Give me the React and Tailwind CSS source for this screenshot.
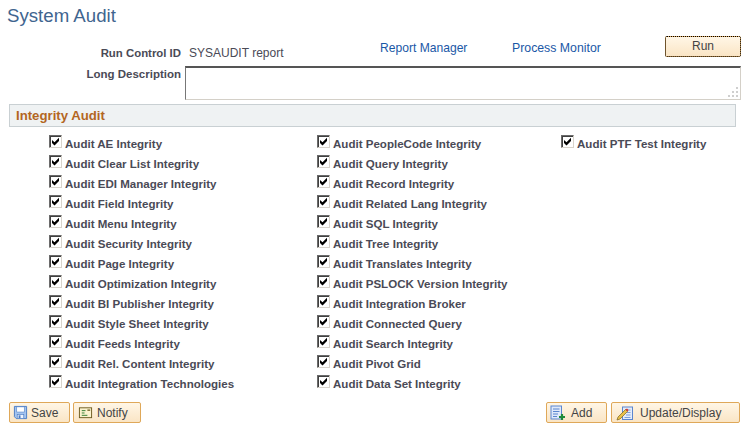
const col1 = ["Audit AE Integrity","Audit Clear List Integrity","Audit EDI Manager Integrity","Audit Field Integrity","Audit Menu Integrity","Audit Security Integrity","Audit Page Integrity","Audit Optimization Integrity","Audit BI Publisher Integrity","Audit Style Sheet Integrity","Audit Feeds Integrity","Audit Rel. Content Integrity","Audit Integration Technologies"];
const col2 = ["Audit PeopleCode Integrity","Audit Query Integrity","Audit Record Integrity","Audit Related Lang Integrity","Audit SQL Integrity","Audit Tree Integrity","Audit Translates Integrity","Audit PSLOCK Version Integrity","Audit Integration Broker","Audit Connected Query","Audit Search Integrity","Audit Pivot Grid","Audit Data Set Integrity"];
const col3 = ["Audit PTF Test Integrity"];

function Check({ label }) {
  return (
    <div className="flex h-5 items-start">
      <span className="relative mt-[-2px] h-[13px] w-[13px] shrink-0 border border-t-[#6b6b6b] border-l-[#6b6b6b] border-r-[#d8d4cc] border-b-[#d8d4cc] bg-white shadow-[inset_1px_1px_0_#404040]">
        <svg viewBox="0 0 11 11" className="absolute left-0 top-0 h-[11px] w-[11px]">
          <path d="M2 4 L4.5 6.3 L9 1.8 L9 5 L4.5 9.5 L2 7 Z" fill="#000" />
        </svg>
      </span>
      <span className="ml-[3px] text-[11.55px] leading-[15px] font-bold text-[#4a4a56]">{label}</span>
    </div>
  );
}

function Btn({ children, w, label, center }) {
  return (
    <button className={`flex h-[21px] items-center rounded-[2px] border border-[#dfa859] bg-gradient-to-b from-[#fff6e6] to-[#fae5c5] text-xs text-[#444] ${w}`}>
      {children}
      <span className={center ? "flex-1 text-center" : ""}>{label}</span>
    </button>
  );
}

export default function App() {
  return (
    <div className="h-[434px] w-[756px] overflow-hidden bg-white font-['Liberation_Sans',Arial,sans-serif]">
      <h1 className="pl-[7px] pt-[5px] text-[18.67px] leading-[21px] font-normal text-[#3f658f]">System Audit</h1>

      <div className="mt-[10px] flex h-[30px] items-start">
        <div className="mt-[10px] w-[181px] text-right text-[11.4px] leading-[15px] font-bold text-[#4a4a56]">Run Control ID</div>
        <div className="ml-2 mt-[10px] w-[191px] text-xs leading-[15px] text-[#4a4a56]">SYSAUDIT report</div>
        <a className="mt-[6px] w-[132px] text-[12.1px] leading-[13px] text-[#1a57a6]">Report Manager</a>
        <a className="mt-[6px] w-[153px] text-[12.3px] leading-[13px] text-[#1a57a6]">Process Monitor</a>
        <button className="h-[21px] w-[76px] rounded-[2px] border border-dotted border-black bg-[#dfa859] text-xs text-[#444]">
          <span className="block h-full w-full bg-gradient-to-b from-[#fff6e6] to-[#fae5c5] leading-[19px]">Run</span>
        </button>
      </div>

      <div className="flex h-[34px] items-start">
        <div className="mt-[1px] w-[181px] text-right text-[11.5px] leading-[15px] font-bold text-[#4a4a56]">Long Description</div>
        <div className="relative ml-1 h-[34px] w-[556px] border border-t-2 border-l border-t-[#555] border-l-[#777] border-r-[#d4d0c8] border-b-[#d4d0c8] bg-white">
          <svg viewBox="0 0 12 12" className="absolute bottom-[1px] right-[1px] h-3 w-3">
            <g fill="#cfcfcf">
              <rect x="9" y="1" width="2" height="2" />
              <rect x="5" y="5" width="2" height="2" />
              <rect x="9" y="5" width="2" height="2" />
              <rect x="1" y="9" width="2" height="2" />
              <rect x="5" y="9" width="2" height="2" />
              <rect x="9" y="9" width="2" height="2" />
            </g>
          </svg>
        </div>
      </div>

      <div className="ml-[9px] mt-1 flex h-[23px] w-[727px] items-center border border-[#c9d0d3] bg-[#eff2f3] pl-[6px] text-[13.2px] font-bold text-[#b3661f]">Integrity Audit</div>

      <div className="mt-[10px] flex h-[260px] pl-[49px]">
        <div className="w-[268px]">{col1.map((l) => <Check key={l} label={l} />)}</div>
        <div className="w-[244px]">{col2.map((l) => <Check key={l} label={l} />)}</div>
        <div>{col3.map((l) => <Check key={l} label={l} />)}</div>
      </div>

      <div className="mt-[5px] flex items-start pl-[9px]">
        <Btn w="w-[61px]" label="Save">
          <svg viewBox="0 0 16 16" className="ml-[3px] mr-[3px] h-[15px] w-[15px]">
            <path d="M1.5 1.5 H14.5 V14.5 H3.5 L1.5 12.5 Z" fill="#a4c4ef" stroke="#4a7cc4" />
            <rect x="4" y="2" width="8" height="5.5" fill="#fff" stroke="#4a7cc4" strokeWidth="0.6" />
            <rect x="4.5" y="10" width="7" height="4.5" fill="#eef3fc" stroke="#4a7cc4" strokeWidth="0.7" />
            <rect x="6" y="11" width="2" height="3" fill="#4a7cc4" />
          </svg>
        </Btn>
        <div className="ml-[3px]">
          <Btn w="w-[68px]" label="Notify">
            <svg viewBox="0 0 16 16" className="ml-[4px] mr-[4px] h-[15px] w-[15px]">
              <rect x="1.5" y="3" width="13" height="10.5" fill="#fbf3cf" stroke="#6b5a1e" />
              <path d="M4 6 H8 M4 8.5 H7 M4 11 H10" stroke="#2f7a2f" strokeWidth="1" />
              <path d="M10 5.5 H13" stroke="#6b5a1e" strokeWidth="1.4" />
            </svg>
          </Btn>
        </div>
        <div className="ml-[405px]">
          <Btn w="w-[61px]" label="Add">
            <svg viewBox="0 0 16 16" className="ml-[3px] mr-[5px] h-4 w-4 shrink-0">
              <rect x="1" y="1" width="10.5" height="13" fill="#dfe9fa" stroke="#5b86cf" />
              <path d="M3 4 H9.5 M3 6.5 H9.5 M3 9 H8 M3 11.5 H7" stroke="#5b86cf" strokeWidth="1" />
              <path d="M12 9 V15 M9 12 H15" stroke="#1f8a3a" strokeWidth="2.2" />
            </svg>
          </Btn>
        </div>
        <div className="ml-[4px]">
          <Btn w="w-[129px]" label="Update/Display">
            <svg viewBox="0 0 18 16" className="ml-[4px] mr-[6px] h-4 w-[18px] shrink-0">
              <rect x="6.5" y="2" width="10" height="12.5" fill="#e4ecfa" stroke="#5b86cf" />
              <path d="M9 5 H14.5 M11 7.5 H14.5 M10 10 H14.5 M8.5 12.5 H14.5" stroke="#7ea0d8" strokeWidth="1" />
              <path d="M1 15 L2 12 L9.5 4.5 L11.5 6.5 L4 14 Z" fill="#e8c04a" stroke="#7a6420" strokeWidth="0.7" />
              <path d="M9.5 4.5 L11.5 6.5 L12.5 5 L11 3.5 Z" fill="#d8342c" />
            </svg>
          </Btn>
        </div>
      </div>
    </div>
  );
}
